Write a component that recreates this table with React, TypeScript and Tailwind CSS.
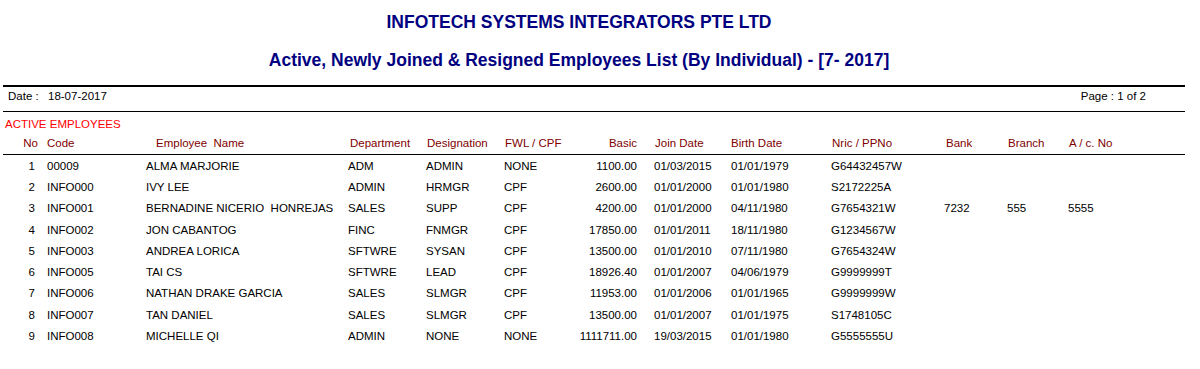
import React from 'react';

type Row = {
  no: number;
  code: string;
  name: string;
  dept: string;
  desig: string;
  fwl: string;
  basic: string;
  join: string;
  birth: string;
  nric: string;
  bank?: string;
  branch?: string;
  acc?: string;
};

const rows: Row[] = [
  { no: 1, code: '00009', name: 'ALMA MARJORIE', dept: 'ADM', desig: 'ADMIN', fwl: 'NONE', basic: '1100.00', join: '01/03/2015', birth: '01/01/1979', nric: 'G64432457W' },
  { no: 2, code: 'INFO000', name: 'IVY LEE', dept: 'ADMIN', desig: 'HRMGR', fwl: 'CPF', basic: '2600.00', join: '01/01/2000', birth: '01/01/1980', nric: 'S2172225A' },
  { no: 3, code: 'INFO001', name: 'BERNADINE NICERIO\u00a0 HONREJAS', dept: 'SALES', desig: 'SUPP', fwl: 'CPF', basic: '4200.00', join: '01/01/2000', birth: '04/11/1980', nric: 'G7654321W', bank: '7232', branch: '555', acc: '5555' },
  { no: 4, code: 'INFO002', name: 'JON CABANTOG', dept: 'FINC', desig: 'FNMGR', fwl: 'CPF', basic: '17850.00', join: '01/01/2011', birth: '18/11/1980', nric: 'G1234567W' },
  { no: 5, code: 'INFO003', name: 'ANDREA LORICA', dept: 'SFTWRE', desig: 'SYSAN', fwl: 'CPF', basic: '13500.00', join: '01/01/2010', birth: '07/11/1980', nric: 'G7654324W' },
  { no: 6, code: 'INFO005', name: 'TAI CS', dept: 'SFTWRE', desig: 'LEAD', fwl: 'CPF', basic: '18926.40', join: '01/01/2007', birth: '04/06/1979', nric: 'G9999999T' },
  { no: 7, code: 'INFO006', name: 'NATHAN DRAKE GARCIA', dept: 'SALES', desig: 'SLMGR', fwl: 'CPF', basic: '11953.00', join: '01/01/2006', birth: '01/01/1965', nric: 'G9999999W' },
  { no: 8, code: 'INFO007', name: 'TAN DANIEL', dept: 'SALES', desig: 'SLMGR', fwl: 'CPF', basic: '13500.00', join: '01/01/2007', birth: '01/01/1975', nric: 'S1748105C' },
  { no: 9, code: 'INFO008', name: 'MICHELLE QI', dept: 'ADMIN', desig: 'NONE', fwl: 'NONE', basic: '1111711.00', join: '19/03/2015', birth: '01/01/1980', nric: 'G5555555U' },
];

const cols = 'grid grid-cols-[40px_106px_202px_78px_78px_56px_77px_94px_100px_113px_63px_61px_1fr] whitespace-nowrap';

export default function App(): React.ReactNode {
  return (
    <div className="w-[1200px] h-[369px] bg-white font-['Liberation_Sans',Arial,sans-serif] text-black overflow-hidden">
      {/* Report titles */}
      <div className="w-[1158px] text-center font-bold text-[#000080] text-[17.5px] leading-none">
        <div className="pt-[14px]">INFOTECH SYSTEMS INTEGRATORS PTE LTD</div>
        <div className="pt-[20px]">Active, Newly Joined &amp; Resigned Employees List (By Individual) - [7- 2017]</div>
      </div>

      <div className="ml-[3px] w-[1182px] mt-[16px] border-t-2 border-black">
        <div className="flex items-center h-[24px] pb-[4px] text-[11.5px]">
          <span className="ml-[5px] w-[40px]">Date :</span>
          <span>18-07-2017</span>
          <span className="ml-auto mr-[39px]">Page : 1 of 2</span>
        </div>
        <div className="border-t border-black" />
      </div>

      <div className="text-[11.5px] leading-none">
        <div className="pl-[5px] pt-[7px] text-[#ff0000]">ACTIVE EMPLOYEES</div>

        <div className={`${cols} text-[#800000] pt-[7px] pb-[5px]`}>
          <div className="text-right pr-[2px]">No</div>
          <div className="pl-[7px]">Code</div>
          <div className="pl-[10px]">Employee&nbsp; Name</div>
          <div className="pl-[2px]">Department</div>
          <div className="pl-[1px]">Designation</div>
          <div className="pl-[1px]">FWL / CPF</div>
          <div className="text-right">Basic</div>
          <div className="pl-[18px]">Join Date</div>
          <div>Birth Date</div>
          <div className="pl-[1px]">Nric / PPNo</div>
          <div className="pl-[2px]">Bank</div>
          <div className="pl-[1px]">Branch</div>
          <div className="pl-[1px]">A / c. No</div>
        </div>

        <div className="ml-[3px] w-[1182px] border-t border-black" />

        <div className="pt-[1px]">
          {rows.map((r) => (
            <div key={r.no} className={`${cols} h-[21.25px] items-center`}>
              <div className="text-right pr-[5px]">{r.no}</div>
              <div className="pl-[7px]">{r.code}</div>
              <div>{r.name}</div>
              <div>{r.dept}</div>
              <div>{r.desig}</div>
              <div>{r.fwl}</div>
              <div className="text-right">{r.basic}</div>
              <div className="pl-[17px]">{r.join}</div>
              <div>{r.birth}</div>
              <div>{r.nric}</div>
              <div>{r.bank}</div>
              <div>{r.branch}</div>
              <div>{r.acc}</div>
            </div>
          ))}
        </div>
      </div>
    </div>
  );
}
